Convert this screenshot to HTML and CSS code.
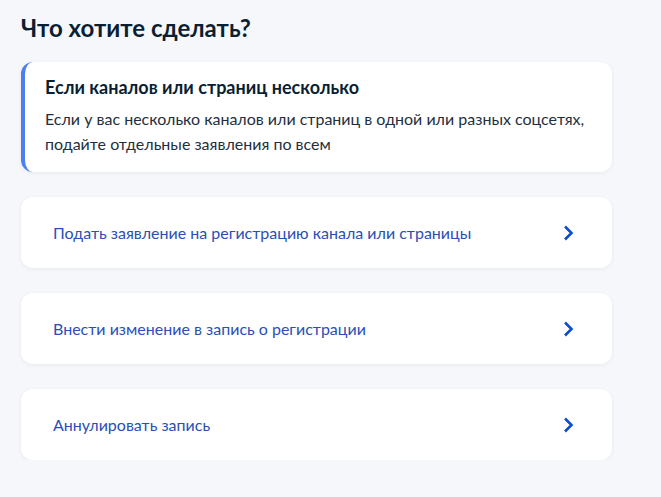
FILE: index.html
```html
<!DOCTYPE html>
<html lang="ru">
<head>
<meta charset="UTF-8" />
<meta name="viewport" content="width=device-width, initial-scale=1" />
<title>Что хотите сделать?</title>
<link rel="stylesheet" href="styles.css">
</head>
<body>

<h1>Что хотите сделать?</h1>

<div class="note">
  <h2>Если каналов или страниц несколько</h2>
  <p>Если у вас несколько каналов или страниц в одной или разных соцсетях, подайте отдельные заявления по всем</p>
</div>

<div class="options">
  <a class="option" href="#">
    <span>Подать заявление на регистрацию канала или страницы</span>
    <svg class="chevron" width="16" height="18" viewBox="0 0 16 18"><path d="M5 2.5 L11.5 9 L5 15.5" fill="none" stroke="#0d4cd3" stroke-width="2.6"/></svg>
  </a>
  <a class="option" href="#">
    <span>Внести изменение в запись о регистрации</span>
    <svg class="chevron" width="16" height="18" viewBox="0 0 16 18"><path d="M5 2.5 L11.5 9 L5 15.5" fill="none" stroke="#0d4cd3" stroke-width="2.6"/></svg>
  </a>
  <a class="option" href="#">
    <span>Аннулировать запись</span>
    <svg class="chevron" width="16" height="18" viewBox="0 0 16 18"><path d="M5 2.5 L11.5 9 L5 15.5" fill="none" stroke="#0d4cd3" stroke-width="2.6"/></svg>
  </a>
</div>

</body>
</html>
```

FILE: styles.css
```css
body {
  background-color: #f5f7fb;
  color: #0b1f33;
  font-family: Lato, 'Noto Sans', sans-serif;
  margin: 0;
  padding: 12px 49px 0 21px;
}
h1 {
  font-size: 24px;
  line-height: 32px;
  font-weight: 700;
  margin: 0 0 18px;
}
.note {
  background: #fff;
  border-left: 4px solid #4a80ef;
  border-radius: 12px;
  padding: 13px 24px 16px 20px;
  box-shadow: 0 1px 4px rgba(11, 31, 51, 0.06);
}
.note h2 {
  font-size: 18px;
  line-height: 24px;
  font-weight: 700;
  margin: 0 0 7px;
}
.note p {
  font-size: 16px;
  line-height: 25px;
  margin: 0;
  color: #1f2f40;
}
.options {
  display: flex;
  flex-direction: column;
  gap: 25px;
  margin-top: 25px;
}
.option {
  display: flex;
  align-items: center;
  justify-content: space-between;
  height: 71px;
  padding: 0 36px 0 32px;
  background: #fff;
  border-radius: 12px;
  box-shadow: 0 1px 4px rgba(11, 31, 51, 0.06);
  color: #2a4fb5;
  font-size: 16px;
  text-decoration: none;
}
.chevron {
  flex-shrink: 0;
}
```
